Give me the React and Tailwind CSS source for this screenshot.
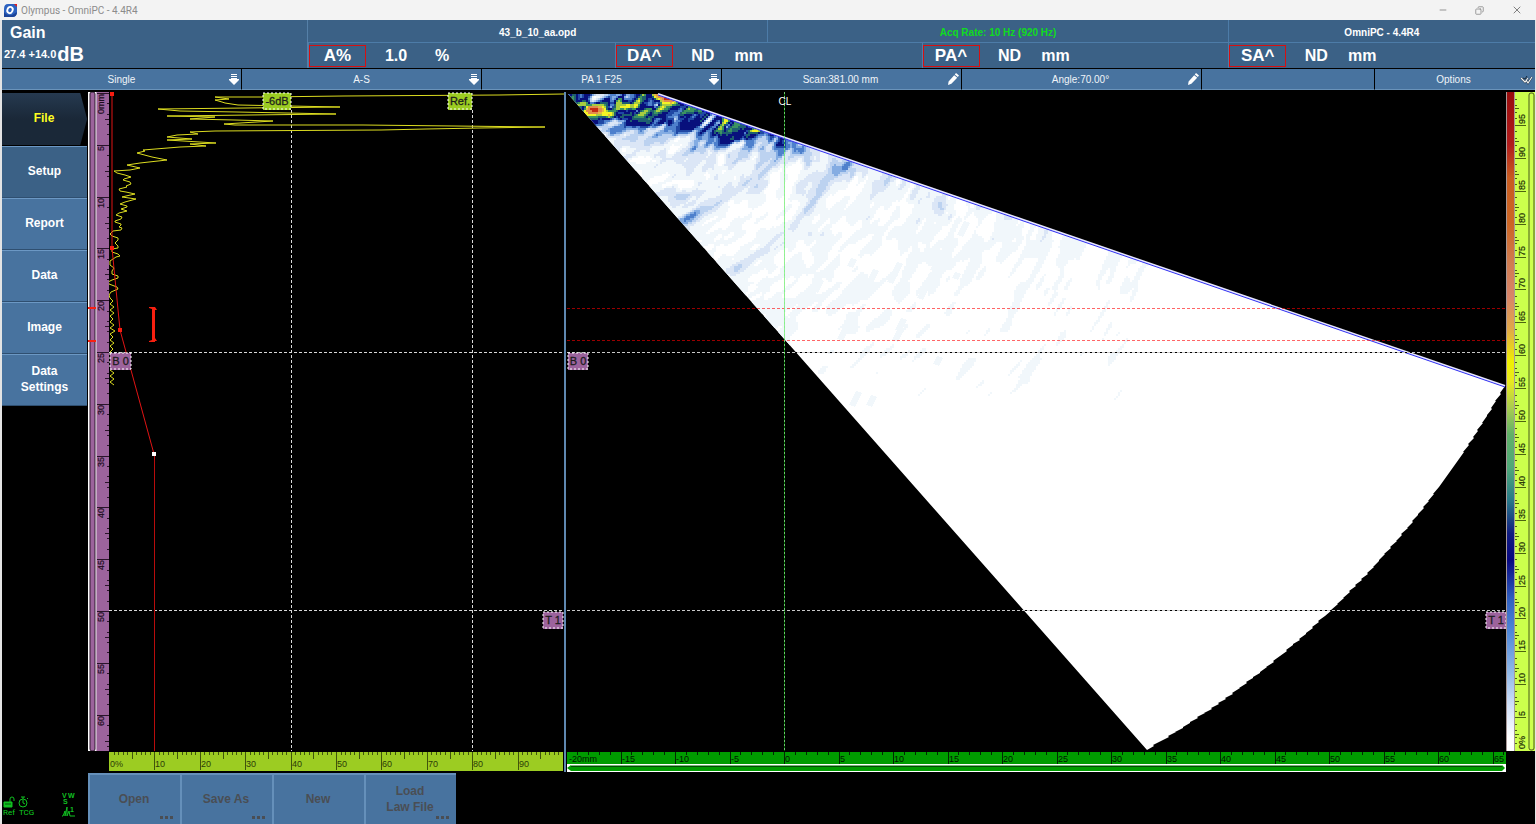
import { Minus, Copy, X } from 'lucide-react'

const readings = [
    { label: 'A%', value: '1.0', unit: '%' },
    { label: 'DA^', value: 'ND', unit: 'mm' },
    { label: 'PA^', value: 'ND', unit: 'mm' },
    { label: 'SA^', value: 'ND', unit: 'mm' },
]

const menus = [
    { label: 'Single', icon: 'down' },
    { label: 'A-S', icon: 'down' },
    { label: 'PA 1 F25', icon: 'down' },
    { label: 'Scan:381.00 mm', icon: 'pencil' },
    { label: 'Angle:70.00°', icon: 'pencil' },
    { label: '', icon: null },
    { label: 'Options', icon: 'probe' },
]

const sideItems = ['Setup', 'Report', 'Data', 'Image', 'Data Settings']

const actions = [
    { label: 'Open', more: true },
    { label: 'Save As', more: true },
    { label: 'New', more: false },
    { label: 'Load Law File', more: true },
]

const range = (from, to) => Array.from({ length: to - from + 1 }, (_, i) => from + i)

// small seeded generator, so that the trace is stable between renders
function createRandom(seed) {
    let s = seed
    return () => {
        s = (s * 1664525 + 1013904223) % 4294967296
        return s / 4294967296
    }
}

/* ---------- A-scan data ---------- */

const echoTrace = [
    [564, 94], [499, 95], [343, 96], [263, 97], [215, 97], [229, 99], [215, 100], [222, 102], [225, 103],
    [238, 105], [340, 107], [245, 108], [158, 109], [180, 111], [237, 112], [336, 114], [167, 116],
    [215, 117], [190, 119], [235, 120], [273, 121], [224, 124], [235, 125], [363, 125], [545, 127],
    [480, 128], [426, 129], [381, 130], [215, 131], [190, 132], [198, 134], [177, 135], [167, 137],
    [192, 139], [167, 140], [216, 143], [190, 144], [206, 146], [180, 147], [143, 150], [145, 151],
    [137, 153], [152, 157], [167, 160], [140, 163], [127, 165], [140, 168], [114, 171], [125, 175],
    [131, 177], [123, 180], [131, 184], [127, 187], [119, 189], [126, 192], [135, 194], [122, 197],
    [136, 199], [120, 204], [127, 207], [121, 209], [127, 211], [116, 215], [121, 219], [115, 222],
    [121, 225], [122, 228], [113, 231], [112, 236], [118, 240], [118, 246], [112, 249], [118, 254],
    [116, 257], [110, 265], [112, 271], [118, 276], [112, 280], [109, 284], [118, 289], [109, 295],
]

function buildWave() {
    const random = createRandom(11)
    const points = []
    echoTrace.forEach(([x, y], i) => {
        const previous = echoTrace[i - 1]
        if (previous && y > 170 && y - previous[1] > 2) {
            const side = i % 2 ? 3 : -3
            points.push([Math.round((x + previous[0]) / 2) + side, Math.round((y + previous[1]) / 2)])
        }
        points.push([x, y])
    })
    for (let y = 298, i = 0; y <= 385; y += 3, i++) {
        points.push([i % 2 ? 113 + Math.round(random() * 2) : 110, y])
    }
    return points.map((p) => p.join(',')).join(' ')
}

/* ---------- S-scan data ---------- */

const ARC_CENTER = [658, -89]
const ARC_RADIUS = 971

function buildSector() {
    const points = ['568,94', '658,94', '1505,386']
    for (let i = 1; i < 60; i++) {
        const angle = ((29.3 + (i * 30.5) / 60) * Math.PI) / 180
        for (const r of [ARC_RADIUS - 1, ARC_RADIUS]) {
            points.push(`${Math.round(ARC_CENTER[0] + r * Math.cos(angle))},${Math.round(ARC_CENTER[1] + r * Math.sin(angle))}`)
        }
    }
    points.push('1147,750')
    return points.join(' ')
}

// lower amplitude limit (%) and colour of each palette band
const palette = [
    [84, '#c42c14'],
    [66, '#e08c50'],
    [61, '#e8b840'],
    [51, '#f4f424'],
    [46, '#a8cc40'],
    [41, '#3c9460'],
    [35, '#1f6070'],
    [27, '#08107c'],
    [23, '#2048a4'],
    [18, '#4e80cc'],
    [14.5, '#84ace2'],
    [10.5, '#bcd2f0'],
    [6.8, '#dbe6f6'],
    [3.4, '#f1f7fb'],
]

// cx, cy, rx, ry, rotation (deg), amplitude
const reflectors = [
    [592, 109, 10, 5, 5, 46],
    [609, 114, 7, 3, 5, 34],
    [629, 106, 7, 3, -5, 38],
    [662, 96, 10, 3, 18, 54],
    [756, 129, 7, 2, -5, 36],
    [582, 100, 8, 3, 10, 10],
    [618, 101, 4, 7, 40, 13],
    [603, 103, 7, 3, -20, 6],
    [641, 99, 8, 3, -15, 14],
    [673, 102, 9, 3, 12, 16],
    [598, 122, 12, 5, 40, 8],
    [636, 116, 9, 6, -20, 12],
    [657, 108, 12, 3, -10, 8],
    [695, 110, 14, 4, 15, 12],
    [722, 118, 14, 3, 20, 8],
    [742, 135, 18, 3, -18, 16],
    [790, 147, 22, 3, 15, 7],
    [686, 219, 13, 6, -30, 13],
    [705, 207, 26, 5, -25, 6],
    [672, 193, 20, 6, 10, 5],
    [748, 260, 18, 4, -32, 7],
    [775, 240, 22, 6, -45, 5],
    [762, 166, 24, 7, -50, 5],
    [738, 182, 12, 4, -35, 4],
    [820, 190, 34, 7, -52, 4],
    [848, 163, 14, 4, -35, 7],
    [805, 212, 24, 8, -55, 3],
    [915, 190, 14, 6, -50, 4],
    [740, 275, 12, 8, 0, 3],
    [690, 150, 34, 14, 0, 3],
    [790, 315, 26, 8, -45, 3],
    [765, 300, 20, 10, -30, 3],
    [842, 302, 10, 4, -45, 4],
    [935, 210, 16, 8, -60, 3],
    [825, 240, 16, 6, -50, 2],
]

function hash(a, b) {
    const n = Math.sin(a * 127.1 + b * 311.7) * 43758.5453
    return n - Math.floor(n)
}

function smoothNoise(u, v) {
    const iu = Math.floor(u)
    const iv = Math.floor(v)
    const fu = u - iu
    const fv = v - iv
    const su = fu * fu * (3 - 2 * fu)
    const sv = fv * fv * (3 - 2 * fv)
    const a = hash(iu, iv) * (1 - su) + hash(iu + 1, iv) * su
    const b = hash(iu, iv + 1) * (1 - su) + hash(iu + 1, iv + 1) * su
    return a * (1 - sv) + b * sv
}

function amplitudeAt(x, y) {
    const depth = y - (x < 658 ? 94 : 94 + (x - 658) * 0.345)
    const beam = Math.atan2(y - ARC_CENTER[1], x - ARC_CENTER[0])
    const v = beam * 340
    const u = Math.hypot(x - ARC_CENTER[0], y - ARC_CENTER[1]) - 0.35 * v
    const noise = 0.6 * smoothNoise(u / 5, v / 11) + 0.4 * smoothNoise(u / 14 + 40, v / 28)
    const band = x < 690 ? 30 : Math.max(14, 30 - (x - 690) * 0.14)
    const near = (21 / (1 + Math.exp((depth - band) / 7))) * Math.exp(-Math.max(0, x - 735) / 75)
    const far = 6.4 * Math.exp(-depth / 260) * Math.exp(-Math.max(0, x - 640) / 620)
    let value = near * (1 + (noise - 0.5) * 2.2) + far * Math.max(0, 1 + (noise - 0.5) * 2.6)
    for (const [cx, cy, rx, ry, rotation, amplitude] of reflectors) {
        const dx = x - cx
        const dy = y - cy
        if (Math.abs(dx) > 80 || Math.abs(dy) > 80) continue
        const t = (rotation * Math.PI) / 180
        const p = (dx * Math.cos(t) + dy * Math.sin(t)) / rx
        const q = (dy * Math.cos(t) - dx * Math.sin(t)) / ry
        value += amplitude * Math.exp(-(p * p + q * q) / 1.4) * (0.8 + noise * 0.4)
    }
    return value
}

// joins equal cells of a row, one path for each colour
function buildEchoes() {
    const paths = palette.map(() => '')
    const cell = 2
    for (let y = 94; y < 470; y += cell) {
        const left = Math.floor((568 + (y - 94) / 1.133) / cell) * cell - cell
        const right = Math.min(1150, y < 96 ? 668 : 668 + (y - 94) / 0.345)
        let level = -1
        let start = left
        for (let x = left; x <= right + cell; x += cell) {
            const value = x > right ? -1 : amplitudeAt(x, y)
            const next = palette.findIndex(([limit]) => value > limit)
            if (next !== level) {
                if (level >= 0) paths[level] += `M${start} ${y}h${x - start}v${cell}h${start - x}z`
                level = next
                start = x
            }
        }
    }
    return paths
}

const sectorPoints = buildSector()
const echoPaths = buildEchoes()
const wavePoints = buildWave()

const faintSpots = [
    [925, 285, 26], [938, 262, 16], [872, 278, 18], [855, 262, 8], [895, 272, 20], [845, 330, 18], [903, 324, 12],
    [857, 398, 14], [874, 400, 10], [900, 335, 10], [941, 360, 8], [960, 275, 6], [820, 285, 12], [965, 228, 14],
]

function Marker({ x, y, width, text, tone = '#9c639c' }) {
    return (
        <g>
            <rect x={x} y={y} width={width} height="17" fill={tone} />
            <rect x={x} y={y} width={width} height="16" fill="none" stroke="#ffffff" strokeDasharray="2 2" />
            <text x={x + width / 2} y={y + 12} textAnchor="middle" fontSize="11" fill="#1c1c1c" stroke="#1c1c1c" strokeWidth="0.3">
                {text}
            </text>
        </g>
    )
}

function AScan() {
    return (
        <svg viewBox="109 92 455 659" preserveAspectRatio="none" className="block h-full w-full bg-black">
            <g shapeRendering="crispEdges" stroke="#d8d8d8" strokeDasharray="3 2">
                <path d="M291 110V751M472 110V751M109 352H564M109 610H564" fill="none" />
            </g>
            <polyline points={wavePoints} fill="none" stroke="#dcdc20" strokeWidth="1" />
            <path d="M112 92V248L120 330L154 454" fill="none" stroke="#e01414" />
            <path d="M154 454V751" fill="none" stroke="#b80c0c" shapeRendering="crispEdges" />
            <path d="M149 307h6l2 3h-2v28l2 3h-2v1h-6v-1l3-1v-31l-3-1z" fill="#f82010" />
            <g fill="#f81c10">
                <rect x="110" y="92" width="4" height="4" />
                <rect x="110" y="246" width="4" height="4" />
                <rect x="118" y="328" width="4" height="4" />
            </g>
            <rect x="152" y="452" width="4" height="4" fill="#ffffff" />
            <Marker x={263} y={93} width={28} text="-6dB" tone="#9ccc22" />
            <Marker x={448} y={93} width={24} text="Ref." tone="#9ccc22" />
            <Marker x={110} y={353} width={21} text="B 0" />
            <Marker x={543} y={612} width={20} text="T 1" />
        </svg>
    )
}

function SScan() {
    return (
        <svg viewBox="567 92 939 659" preserveAspectRatio="none" className="block h-full w-full bg-black">
            <defs>
                <clipPath id="sector">
                    <polygon points={sectorPoints} />
                </clipPath>
            </defs>
            <g clipPath="url(#sector)" shapeRendering="crispEdges">
                <rect x="567" y="92" width="939" height="659" fill="#ffffff" />
                {faintSpots.map(([x, y, length]) => (
                    <path key={`${x}-${y}`} d={`M${x - 8} ${y + length / 2}l${length / 2} ${-length}l6 2l${-length / 2} ${length}z`} fill="#f1f7fb" />
                ))}
                {echoPaths.map((d, i) => (
                    <path key={palette[i][1]} d={d} fill={palette[i][1]} />
                ))}
            </g>
            <path d="M658 94L1505 386" stroke="#e8e8ff" strokeWidth="2" />
            <path d="M658 95L1505 387" stroke="#3030f0" strokeWidth="1" />
            <g shapeRendering="crispEdges" fill="none">
                <path d="M567 308H1506M567 340H1506" stroke="#ff0000" strokeOpacity="0.6" strokeDasharray="3 2" />
                <path d="M567 352H1506M567 610H1506" stroke="#000000" strokeDasharray="3 2" strokeDashoffset="3" />
                <path d="M567 352H1506M567 610H1506" stroke="#c8c8c8" strokeDasharray="3 2" />
                <path d="M784 92V751" stroke="#00e800" strokeOpacity="0.45" />
                <path d="M784 92V751" stroke="#a0e8a0" strokeOpacity="0.7" strokeDasharray="2 2" />
            </g>
            <text x="785" y="105" textAnchor="middle" fontSize="10" fill="#ffffff">CL</text>
            <Marker x={568} y={353} width={20} text="B 0" />
            <Marker x={1486} y={612} width={20} text="T 1" />
        </svg>
    )
}

/* ---------- rulers ---------- */

function DepthRuler() {
    const y = (mm) => Math.round(93 + mm * 10.36)
    return (
        <svg viewBox="96 92 13 659" preserveAspectRatio="none" className="block h-full w-full bg-[#9c639c]">
            <path d="M96 92V751" stroke="#c8a8c8" strokeWidth="2" />
            <g stroke="#2a142a" shapeRendering="crispEdges">
                {range(0, 63).map((mm) => (
                    <path key={mm} d={`M${mm % 5 === 0 ? 97 : 107} ${y(mm)}H109`} />
                ))}
                {range(0, 12).map((i) => (
                    <path key={i} d={`M105 ${y(i * 5 + 2.5)}H109`} />
                ))}
            </g>
            <g fontSize="9" fill="#1c0c1c" stroke="#1c0c1c" strokeWidth="0.2">
                {range(0, 12).map((i) => (
                    <text key={i} textAnchor="end" transform={`translate(104 ${y(i * 5) + 1}) rotate(-90)`}>
                        {i === 0 ? '0mm' : i * 5}
                    </text>
                ))}
            </g>
        </svg>
    )
}

function AmplitudeRuler() {
    const x = (percent) => Math.round(109 + percent * 4.54)
    const size = (percent) => (percent % 10 === 0 ? 18 : percent % 5 === 0 ? 7 : 3)
    return (
        <svg viewBox="109 751 455 21" preserveAspectRatio="none" className="block h-full w-full bg-black">
            <rect x="109" y="752" width="454" height="19" fill="#9ccc22" />
            <g stroke="#40560c" shapeRendering="crispEdges">
                {range(1, 99).map((percent) => (
                    <path key={percent} d={`M${x(percent)} 752v${size(percent)}`} />
                ))}
            </g>
            <g fontSize="9" fill="#2c3c08">
                {range(0, 9).map((i) => (
                    <text key={i} x={i === 0 ? 110 : x(i * 10) + 1} y="767">
                        {i === 0 ? '0%' : i * 10}
                    </text>
                ))}
            </g>
        </svg>
    )
}

function IndexRuler() {
    const x = (mm) => Math.round(784 + mm * 10.9)
    return (
        <svg viewBox="567 751 939 21" preserveAspectRatio="none" className="block h-full w-full bg-black">
            <rect x="567" y="752" width="939" height="12" fill="#009c00" />
            <g stroke="#022802" shapeRendering="crispEdges">
                {range(-19, 66).map((mm) => (
                    <path key={mm} d={`M${x(mm)} 752v${mm % 5 === 0 ? 12 : 3}`} />
                ))}
            </g>
            <g fontSize="9" fill="#001800">
                {range(-4, 13).map((i) => (
                    <text key={i} x={x(i * 5) + (i === -4 ? 3 : 1)} y="762">
                        {i === -4 ? '-20mm' : i * 5}
                    </text>
                ))}
            </g>
            <rect x="567" y="764" width="939" height="8" fill="#ffffff" />
            <path d="M567 768l4-3h931l3 3l-3 3h-931z" fill="#009c00" />
            <path d="M571 765H1502" stroke="#78b878" shapeRendering="crispEdges" />
            <path d="M571 766H1502" stroke="#044c04" shapeRendering="crispEdges" />
        </svg>
    )
}

function PaletteRuler() {
    const y = (percent) => Math.round(750 - percent * 6.58)
    const size = (percent) => (percent % 5 === 0 ? 11 : 2)
    return (
        <svg viewBox="1515 92 13 659" preserveAspectRatio="none" className="block h-full w-full bg-[#ccff4c]">
            <g stroke="#4c6410" shapeRendering="crispEdges">
                {range(1, 99).map((percent) => (
                    <path key={percent} d={`M1515 ${y(percent)}h${size(percent)}`} />
                ))}
                {range(0, 19).map((i) => (
                    <path key={i} d={`M1515 ${y(i * 5 + 2.5)}h4`} />
                ))}
            </g>
            <g fontSize="9" fill="#202c04" stroke="#202c04" strokeWidth="0.2">
                {range(0, 19).map((i) => (
                    <text key={i} transform={`translate(1525 ${y(i * 5) - 1}) rotate(-90)`}>
                        {i === 0 ? '0%' : i * 5}
                    </text>
                ))}
            </g>
        </svg>
    )
}

/* ---------- icons ---------- */

function MenuIcon({ name }) {
    if (name === 'down') {
        return (
            <svg viewBox="0 0 10 12" className="h-3 w-[10px]" fill="#ffffff" aria-hidden="true">
                <path d="M2 1h6v1H2zM2 3h6v1H2zM2 5h6v1h2v1L5 12L0 7V6h2z" />
            </svg>
        )
    }
    if (name === 'pencil') {
        return (
            <svg viewBox="0 0 12 12" className="h-3 w-3" fill="#ffffff" aria-hidden="true">
                <path d="M9 0l3 2.5l-1.2 1.6l-3-2.6zM7.2 2.2l3 2.6L4.4 10.8L1 12l.6-3.6z" />
            </svg>
        )
    }
    if (name === 'probe') {
        return (
            <svg viewBox="0 0 13 12" className="h-3 w-[13px]" fill="none" aria-hidden="true">
                <path d="M1 5l4 4l3-4M6 7l2 3l4-6" stroke="#182838" strokeWidth="2" />
                <path d="M1 5l4 4l3-4M6 7l2 3l4-6" stroke="#f4f4f4" strokeWidth="1.2" />
                <path d="M3 5l2 1l2-3" stroke="#182838" />
            </svg>
        )
    }
    return null
}

function StatusPanel() {
    return (
        <div className="mt-auto flex items-end justify-between pr-3 pb-[6px] text-[8px] leading-[10px] text-[#10d020]">
            <div className="pl-px">
                <svg viewBox="0 0 28 12" className="h-3 w-7" fill="none" stroke="#10c020" aria-hidden="true">
                    <path d="M1 6h8v5H1z" fill="#10c020" />
                    <path d="M7 6V3a2 2 0 0 1 4 0v2" />
                    <path d="M2 8h6" stroke="#045008" />
                    <circle cx="20" cy="7" r="4" />
                    <path d="M20 7V4M20 7l2 1M18 1h4M20 1v2M24 2l1 1" />
                </svg>
                <div className="flex gap-1 font-['Roboto',sans-serif] font-normal">
                    <span>Ref</span>
                    <span>TCG</span>
                </div>
            </div>
            <svg viewBox="0 0 14 26" className="h-[26px] w-[14px]" fill="none" stroke="#10c020" aria-hidden="true">
                <text x="0" y="6" fontSize="7" fill="#10c020" stroke="none">V</text>
                <text x="6" y="6" fontSize="7" fill="#10c020" stroke="none">W</text>
                <text x="1" y="12" fontSize="7" fill="#10c020" stroke="none">S</text>
                <path d="M0 24h1l2-5v5l2-9v9l2-5l1 5h5" />
                <text x="8" y="20" fontSize="7" fill="#10c020" stroke="none">1</text>
            </svg>
        </div>
    )
}

/* ---------- page ---------- */

export default function App() {
    return (
        <div className="flex h-screen flex-col overflow-hidden bg-black font-['Liberation_Sans',Arial,sans-serif]">
            {/* Title bar */}
            <div className="flex h-5 shrink-0 items-center bg-[#f3f3f3] pr-[13px] pl-1">
                <svg viewBox="0 0 13 13" className="h-[13px] w-[13px]" aria-hidden="true">
                    <path d="M4 0h9v8q0 5-5 5H0V5Q0 0 4 0z" fill="#2c62c0" />
                    <path d="M0 8q3 4 8 3l5-3q0 5-5 5H0z" fill="#1c4498" />
                    <ellipse cx="6" cy="6" rx="2.6" ry="3.2" transform="rotate(25 6 6)" fill="none" stroke="#ffffff" strokeWidth="1.8" />
                    <path d="M10 0h3v3z" fill="#e02020" />
                </svg>
                <span className="ml-1 font-['Roboto',sans-serif] text-[10px] text-[#8c8c8c]">Olympus - OmniPC - 4.4R4</span>
                <div className="ml-auto flex items-center gap-[27px] text-[#808080]">
                    <button type="button" aria-label="Minimize"><Minus className="h-[10px] w-[10px]" strokeWidth={2} /></button>
                    <button type="button" aria-label="Restore"><Copy className="h-[9px] w-[9px] -scale-x-100" strokeWidth={2} /></button>
                    <button type="button" aria-label="Close"><X className="h-3 w-3" strokeWidth={2} /></button>
                </div>
            </div>

            <div className="flex min-h-0 flex-1 flex-col border-r border-l-2 border-r-[#e4e4e4] border-l-[#e4e4e4]">
                {/* Gain and readings */}
                <header className="flex h-12 shrink-0 bg-[#3b6186] font-bold text-white">
                    <div className="w-[306px] shrink-0 border-r border-[#5580a8] pt-[3px]">
                        <div className="pl-2 text-[16px] leading-[19px]">Gain</div>
                        <div className="flex items-center gap-px pl-[2px] leading-6">
                            <span className="text-[11px]">27.4 +14.0</span>
                            <span className="text-[20px]">dB</span>
                        </div>
                    </div>
                    <div className="flex min-w-0 flex-1 flex-col">
                        <div className="flex h-6 items-center border-b border-[#4d7ca8] text-center text-[10px]">
                            <div className="flex h-full flex-[3] items-center justify-center border-r border-[#4d7ca8] pt-[2px]">43_b_10_aa.opd</div>
                            <div className="flex h-full flex-[3] items-center justify-center border-r border-[#4d7ca8] pt-[2px] text-[#10dc20]">Acq Rate: 10 Hz (920 Hz)</div>
                            <div className="flex h-full flex-[2] items-center justify-center pt-[2px]">OmniPC - 4.4R4</div>
                        </div>
                        <div className="grid flex-1 grid-cols-4">
                            {readings.map((reading) => (
                                <div key={reading.label} className="flex items-center border-l border-l-[#4d7ca8] pt-px text-[16px]">
                                    <span className="flex h-[22px] w-[57px] items-center justify-center border border-[#d81010] text-[17px]">{reading.label}</span>
                                    <span className="w-[60px] text-center">{reading.value}</span>
                                    <span className="w-8 text-center">{reading.unit}</span>
                                </div>
                            ))}
                        </div>
                    </div>
                </header>

                {/* Menus */}
                <div className="grid h-6 shrink-0 grid-cols-[240fr_240fr_240fr_240fr_240fr_173fr_160fr] border-t border-b-2 border-t-black border-b-black text-[10px] text-[#f0f4f8]">
                    {menus.map((menu, i) => (
                        <button
                            key={i}
                            type="button"
                            aria-label={menu.label || 'Empty'}
                            className="flex items-center border-r border-b border-r-black border-b-[#6a93ba] bg-[#48739f] pr-[2px] pl-3 last:border-r-0"
                        >
                            <span className="flex-1">{menu.label}</span>
                            <MenuIcon name={menu.icon} />
                        </button>
                    ))}
                </div>

                <div className="flex min-h-0 flex-1">
                    {/* Side menu */}
                    <nav className="flex w-[86px] shrink-0 flex-col text-[12px] font-bold text-white">
                        <button
                            type="button"
                            className="mt-px mb-px h-[52px] bg-linear-to-b from-[#263a50] via-[#1a2838] to-[#1a2838] pr-[2px] pb-[2px] text-[#ffff20] [clip-path:polygon(0_0,91%_0,99%_50%,91%_100%,0_100%)]"
                        >
                            File
                        </button>
                        {sideItems.map((item, i) => (
                            <button
                                key={item}
                                type="button"
                                className={`mr-px h-[52px] border-t border-b border-t-[#6c98c4] border-b-[#2f4f70] px-4 pb-[2px] leading-4 ${i === 0 ? 'bg-[#3b6186]' : 'bg-[#48739f]'
                                    }`}
                            >
                                {item}
                            </button>
                        ))}
                        <StatusPanel />
                    </nav>

                    <div className="flex min-w-0 flex-1 flex-col">
                        {/* Views with their rulers */}
                        <div className="grid min-h-0 flex-1 grid-cols-[8px_13px_455fr_3px_939fr_9px_13px_7px] grid-rows-[minmax(0,1fr)_21px]">
                            <svg viewBox="0 0 8 659" preserveAspectRatio="none" className="block h-full w-full bg-white">
                                <rect x="2" y="0" width="5" height="659" rx="2" fill="#9c639c" stroke="#2c182c" />
                                <path d="M0 216h8M0 249h8" stroke="#f82010" strokeWidth="2" />
                            </svg>
                            <DepthRuler />
                            <AScan />
                            <div className="row-span-2 mr-px bg-[#5f88b0]" />
                            <SScan />
                            <div className="border-x border-[#a89898] bg-[linear-gradient(to_bottom,#980c0c_0%,#b01c1c_8%,#c85c20_13%,#cc6624_20%,#d07c50_26%,#d88468_31%,#e0a848_36%,#f0f000_41%,#e8e820_44%,#a8cc50_48%,#60b068_52%,#50a878_57%,#287888_62%,#101c80_67%,#080880_71%,#3060c0_77%,#5088d8_82%,#90b8e8_88%,#d0e0f8_93%,#ffffff_98%)]" />
                            <PaletteRuler />
                            <svg viewBox="0 0 7 659" preserveAspectRatio="none" className="block h-full w-full bg-[#ccff4c]">
                                <rect x="1" y="1" width="5" height="657" rx="2" fill="#ccff4c" stroke="#48581c" />
                            </svg>
                            <div className="col-span-2" />
                            <AmplitudeRuler />
                            <IndexRuler />
                        </div>

                        {/* Actions */}
                        <div className="mt-px flex h-[51px] shrink-0 text-[12px] leading-4 font-bold text-[#4a4e54]">
                            {actions.map((action) => (
                                <button
                                    key={action.label}
                                    type="button"
                                    className="relative w-[92px] border-t-2 border-l-2 border-[#6590ba] bg-[#48739f] pr-5 pb-[2px] pl-[18px]"
                                >
                                    {action.label}
                                    {action.more && (
                                        <span className="absolute right-[7px] bottom-[5px] flex gap-[2px]">
                                            <span className="h-[3px] w-[3px] bg-[#4a4e54]" />
                                            <span className="h-[3px] w-[3px] bg-[#4a4e54]" />
                                            <span className="h-[3px] w-[3px] bg-[#4a4e54]" />
                                        </span>
                                    )}
                                </button>
                            ))}
                        </div>
                    </div>
                </div>
            </div>
        </div>
    )
}
